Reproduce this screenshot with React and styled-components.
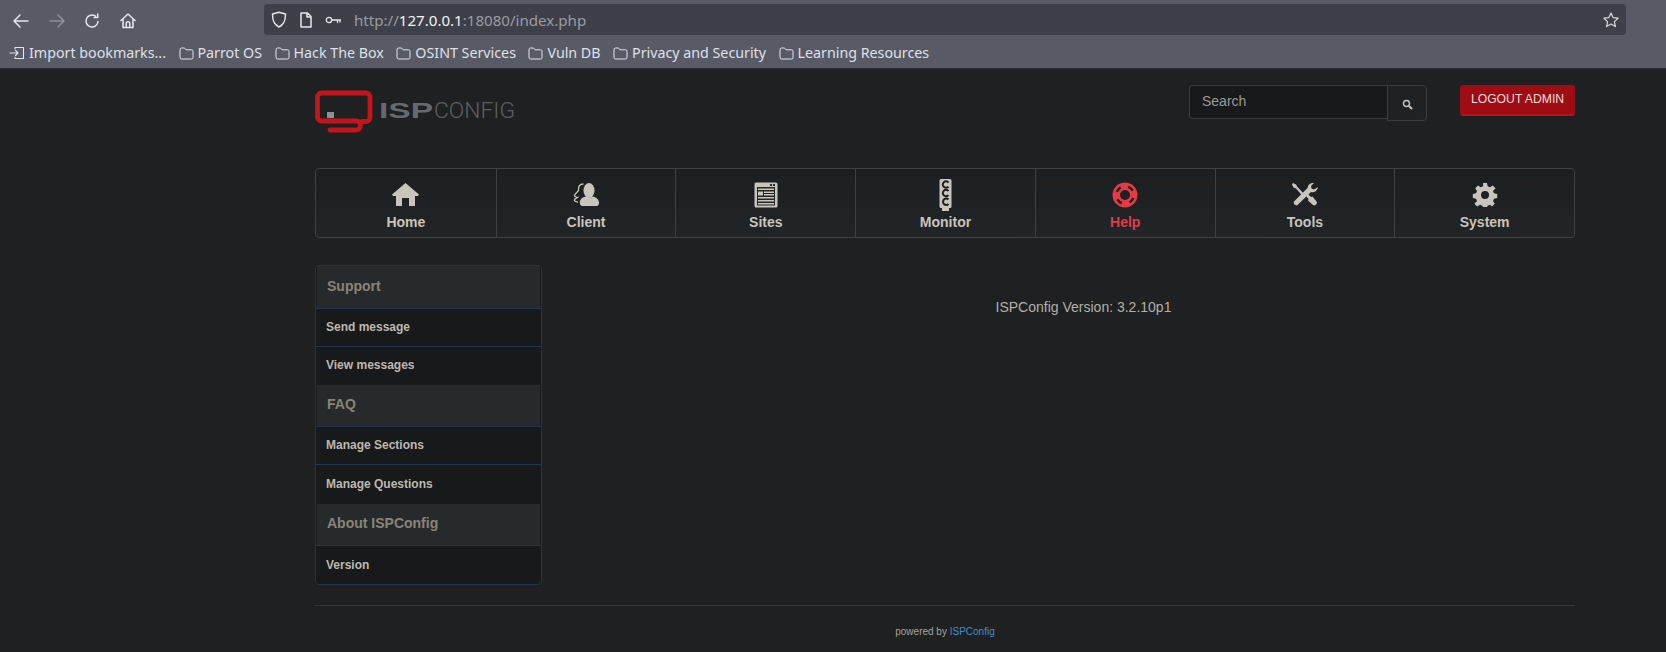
import React from 'react';
import styled, { createGlobalStyle } from 'styled-components';

const Global = createGlobalStyle`
  html, body { margin: 0; padding: 0; background: #1e2022; }
  body { font-family: "Liberation Sans", Arial, sans-serif; overflow: hidden; }
  #root { width: 1666px; height: 652px; overflow: hidden; }
`;

const Chrome = styled.header`
  height: 68px; background: #585a66; border-bottom: 1px solid #2c2e35;
  font-family: "Noto Sans", sans-serif; color: #e4e6ec;
  display: flex; flex-direction: column;
`;
const ToolRow = styled.div`display: flex; align-items: center; height: 40px; padding: 3px 0 2px 0; box-sizing: border-box;`;
const NavIcons = styled.div`display: flex; align-items: center; gap: 17.5px; width: 264px; padding-left: 12px; box-sizing: border-box;`;
const UrlBar = styled.div`
  width: 1362px; height: 31px; margin-top: -2px; background: #3e4049; border-radius: 4px;
  display: flex; align-items: center; padding: 0 7px 0 7px; box-sizing: border-box; gap: 12px;
`;
const Url = styled.div`font-size: 15.1px; color: #9a9ca5; flex: 1;`;
const UrlHost = styled.span`color: #f2f3f6;`;
const BookRow = styled.div`display: flex; align-items: center; height: 25px; padding-left: 9px; gap: 12.5px; font-size: 14.25px;`;
const Book = styled.div`display: flex; align-items: center; gap: 4px; color: #dfe1e8; white-space: nowrap;`;

const Page = styled.div`width: 1260px; margin-left: 315px;`;
const Top = styled.div`display: flex; align-items: flex-start; height: 99px; padding-top: 16px; box-sizing: border-box;`;
const LogoBox = styled.div`width: 874px; height: 50px;`;
const SearchGroup = styled.form`display: flex; align-items: flex-start; margin: 0; width: 238px;`;
const SearchInput = styled.div`
  width: 198px; height: 34px; box-sizing: border-box; background: #18191b; border: 1px solid #3b3e40; border-right: 0;
  border-radius: 4px 0 0 4px; color: #9d9a90; font-size: 14px; padding: 0 12px; line-height: 30px;
`;
const SearchBtn = styled.button`
  width: 40px; height: 36px; box-sizing: border-box; background: #1e2224; border: 1px solid #3b3e40;
  border-radius: 0 4px 4px 0; padding: 2px 0 0; color: #c9c5bc; display: flex; align-items: center; justify-content: center;
`;
const Logout = styled.button`
  margin-left: 33px; width: 115px; height: 31px; box-sizing: border-box; background: #a00c14; border: 1px solid #a00c14;
  border-bottom: 2px solid #bb1119; border-radius: 3px; color: #ecdcdc; font: 12.2px "Liberation Sans", sans-serif; padding: 0 0 2px;
`;

const Menu = styled.nav`
  display: grid; grid-template-columns: repeat(7, 1fr); height: 68px;
  border: 1px solid #3e4143; border-radius: 4px; background: linear-gradient(#1c1e20, #212527);
`;
const MenuItem = styled.a`
  display: flex; flex-direction: column; align-items: center;
  border-left: ${p => (p.$first ? '0' : '1px solid #3e4143')};
  color: ${p => (p.$active ? '#e63a45' : '#c9c5bc')}; font-weight: 700; font-size: 14px;
`;
const IconWrap = styled.div`height: 44px; display: flex; align-items: center; justify-content: center; padding-top: 7px; box-sizing: border-box;`;
const MenuLabel = styled.span`margin-top: 1px; line-height: 16px;`;

const Body = styled.div`display: grid; grid-template-columns: 227px 1fr; margin-top: 27px;`;
const Side = styled.aside`
  border: 1px solid #1e3650; border-radius: 4px; background: #18191b; overflow: hidden; height: 320px; box-sizing: border-box; width: 227px;
`;
const SideHead = styled.div`
  height: ${p => p.$h}px; background: #262a2c; color: #8a8475; font-weight: 700; font-size: 14px; box-sizing: border-box;
  padding: 0 0 ${p => p.$pb}px 11px; display: flex; align-items: center; border-bottom: 1px solid #1e3650;
  box-shadow: inset 1px 0 #18191b, inset -1px 0 #18191b;
`;
const SideItem = styled.a`
  display: flex; align-items: center; height: ${p => p.$h}px; padding: 0 0 ${p => p.$pb}px 10px; font-size: 12px; font-weight: 700; color: #bdb8ae;
  box-sizing: border-box; border-bottom: ${p => (p.$line ? '1px solid #1e3650' : '0')};
`;
const Main = styled.main`text-align: center; color: #b3afa6; font-size: 14px; padding-top: 34px; padding-left: 50px;`;
const Rule = styled.hr`margin: 20px 0 0; border: 0; border-top: 1px solid #36393b;`;
const Foot = styled.footer`text-align: center; font-size: 10px; color: #a8a49b; margin-top: 20px;`;
const FootLink = styled.span`color: #3f8fcf;`;

const s = { fill: 'none', stroke: 'currentColor', strokeWidth: 1.5, strokeLinecap: 'round', strokeLinejoin: 'round' };

const Back = () => <svg width="18" height="16" viewBox="0 0 18 16" {...s}><path d="M16 8H2M8 2 2 8l6 6" /></svg>;
const Fwd = () => <svg width="18" height="16" viewBox="0 0 18 16" {...s} stroke="#8c8e98"><path d="M2 8h14M10 2l6 6-6 6" /></svg>;
const Reload = () => <svg width="18" height="16" viewBox="-1 0 18 16" {...s}><path d="M14 8.500A6 6 0 1 1 11.500 3.200" /><path d="M13.700 1v3.600h-3.600" /></svg>;
const HomeO = () => <svg width="18" height="16" viewBox="-1 0 18 16" {...s}><path d="M1 7.500 8 1l7 6.500M3 6v8.500h10V6M6.200 14.500V10.500a1.800 1.800 0 0 1 3.600 0v4" /></svg>;
const Shield = () => <svg width="16" height="17" viewBox="0 0 16 17" {...s} stroke="#e4e6ec"><path d="M8 1.200 14.500 3c0 7-1.500 10.500-6.500 13C3 13.500 1.500 10 1.500 3z" /></svg>;
const Doc = () => <svg width="14" height="16" viewBox="1 0 14 16" {...s} stroke="#e4e6ec"><path d="M3 1h6.500L13 4.500V15H3zM9 1v4h4" /></svg>;
const Key = () => <svg width="17" height="10" viewBox="0 0 16 10" {...s} stroke="#e4e6ec" strokeWidth="1.300"><circle cx="3.500" cy="5" r="2.700" /><path d="M6.200 5H15M12 5v2.500M14.500 5v2" /></svg>;
const Star = () => <svg width="16" height="16" viewBox="0 0 16 16" {...s} strokeWidth="1.200" stroke="#d6d8de"><path d="m8 1 2.100 4.600 5 .6-3.700 3.400 1 5L8 12.100 3.600 14.600l1-5L.9 6.200l5-.6z" /></svg>;
const Folder = () => <svg width="15" height="14" viewBox="0 0 15 14" {...s} strokeWidth="1" stroke="#e4e6ec"><path d="M1 3.500A1.500 1.500 0 0 1 2.500 2h3l1.500 1.800h5.500A1.500 1.500 0 0 1 14 5.300v6.200a1.500 1.500 0 0 1-1.500 1.500h-10A1.500 1.500 0 0 1 1 11.500z" /></svg>;
const ImportI = () => <svg width="16" height="14" viewBox="0 0 16 14" {...s} strokeWidth="1.100" stroke="#e4e6ec"><path d="M6 3V1.500h8.500v11H6V11M1 7h8M6.500 4.500 9 7 6.500 9.500" /></svg>;
const Mag = () => <svg width="11" height="11" viewBox="0 0 11 11" fill="none" stroke="currentColor"><circle cx="4.500" cy="4.500" r="3" strokeWidth="1.400" /><path d="m7 7 3 3" strokeWidth="2" /></svg>;

const Logo = () => (
  <svg width="210" height="50" viewBox="0 0 210 50">
    <path d="M47 36.500H51a4 4 0 0 0 4-4V12a4 4 0 0 0-4-4H6.500a4 4 0 0 0-4 4V32a4 4 0 0 0 4 4H41a4.500 4.500 0 0 1 0 9H15" fill="none" stroke="#c4141c" strokeWidth="4.800" strokeLinecap="round" />
    <rect x="12" y="27" width="7" height="6" fill="#8b9094" />
    <text x="64" y="33" fontFamily="Liberation Sans" fontWeight="700" fontSize="21.500" fill="#646a6f" textLength="54" lengthAdjust="spacingAndGlyphs">ISP</text>
    <text x="119" y="33" fontFamily="Roboto" fontWeight="300" fontSize="21.500" fill="#5a6064" textLength="81" lengthAdjust="spacingAndGlyphs">CONFIG</text>
  </svg>
);

const HomeIcon = () => <svg width="27" height="23" viewBox="0 0 27 23" fill="currentColor"><path d="M13.500 0 0 11.500l1 1.500h3v10h6v-8h7v8h6V13h3l1-1.500z" /></svg>;
const ClientIcon = () => <svg width="26" height="23" viewBox="0 0 26 23" fill="currentColor"><ellipse cx="16" cy="7.500" rx="5.500" ry="7.500" /><path d="M7 21c-1-5 3-7 6-7.500 2 1.500 4.500 1.500 6.500 0 3.500.5 7 3 6.500 7.500a3 3 0 0 1-2 2H9a3 3 0 0 1-2-2z" /><path d="M10.500 1C6.500 1 5 3.500 5.500 7.500L1.500 12c-.5 1.500 1.500 2.500 3 2.500l-3 2c-.5 1.500 1 2.500 3.500 2.500" fill="none" stroke="currentColor" strokeWidth="1.300" /></svg>;
const SitesIcon = () => <svg width="24" height="26" viewBox="0 0 24 26"><rect x="0.500" y="0.500" width="23" height="25" rx="1.500" fill="#c9c5bc" /><rect x="3" y="5" width="18" height="18.500" fill="#232527" /><rect x="16" y="2" width="2" height="2" fill="#232527" /><rect x="19" y="2" width="2" height="2" fill="#232527" /><path d="M4 6.500h16V8H4zM4 9.500h5v4H4zM10 9.500h10V11H10zM10 12h10v1.500H10zM4 15h16v1.500H4zM4 18h16v1.500H4zM4 21h16v1.500H4z" fill="#c9c5bc" /></svg>;
const MonitorIcon = () => <svg width="13" height="32" viewBox="0 0 13 32"><path d="M2 0h9a1.500 1.500 0 0 1 1.500 1.500v26a1.500 1.500 0 0 1-1.500 1.500H10v3H3v-3H2A1.500 1.500 0 0 1 .5 27.500v-26A1.500 1.500 0 0 1 2 0z" fill="#c9c5bc" /><g fill="none" stroke="#1e2022" strokeWidth="2"><path d="M9.500 3.500a3.200 3.200 0 1 0 0 4M9.500 12a3.200 3.200 0 1 0 0 4M9.500 20.500a3.200 3.200 0 1 0 0 4.500" /></g></svg>;
const HelpIcon = () => <svg width="26" height="26" viewBox="0 0 26 26"><circle cx="13" cy="13" r="12.500" fill="currentColor" /><circle cx="13" cy="13" r="5" fill="#1f2224" /><circle cx="13" cy="13" r="8.800" fill="none" stroke="#1f2224" strokeWidth="2.400" strokeDasharray="6 7.820" transform="rotate(20 13 13)" /></svg>;
const ToolsIcon = () => <svg width="26" height="23" viewBox="0 0 26 23" fill="currentColor"><path d="M1 0 4 1.500 5.500 4 13 12l-1.500 2L4 5.500 1.500 4.500 0 1.500z" /><path d="M14 13l2-2 3 3 1.500-.5 4 5c1.500 2-1.500 5-3.500 3.500l-5-4.500.5-1.500z" /><path d="M26 4a5.500 5.500 0 0 1-7 5L5.500 22c-1.500 1.500-5-1.500-3.500-3.500L15.500 5A5.500 5.500 0 0 1 22 0l-3 3 .5 2.500L22 6.500z" /></svg>;
const GearIcon = () => <svg width="26" height="26" viewBox="0 0 26 26" fill="currentColor" fillRule="evenodd"><path d="M11 1h4l.7 3.200 2.300 1 2.800-1.800 2.800 2.800L21 9l1 2.300 3.200.7v4L22 16.700 21 19l1.800 2.800-2.800 2.800L18 22.800l-2.300 1L15 25h-4l-.7-1.200-2.300-1-2.800 1.800-2.800-2.800L5 19l-1-2.300L.8 16v-4L4 11.300 5 9 3.200 6.200 6 3.400 8.800 5.200l2.300-1zM13 9a4 4 0 1 0 0 8 4 4 0 0 0 0-8z" /></svg>;

const items = [
  ['Home', HomeIcon], ['Client', ClientIcon], ['Sites', SitesIcon], ['Monitor', MonitorIcon],
  ['Help', HelpIcon], ['Tools', ToolsIcon], ['System', GearIcon],
];
const books = ['Parrot OS', 'Hack The Box', 'OSINT Services', 'Vuln DB', 'Privacy and Security', 'Learning Resources'];

export default function App() {
  return (
    <>
      <Global />
      <Chrome>
        <ToolRow>
          <NavIcons><Back /><Fwd /><Reload /><HomeO /></NavIcons>
          <UrlBar>
            <Shield /><Doc /><Key />
            <Url>http://<UrlHost>127.0.0.1</UrlHost>:18080/index.php</Url>
            <Star />
          </UrlBar>
        </ToolRow>
        <BookRow>
          <Book><ImportI />Import bookmarks...</Book>
          {books.map(b => <Book key={b}><Folder />{b}</Book>)}
        </BookRow>
      </Chrome>
      <Page>
        <Top>
          <LogoBox><Logo /></LogoBox>
          <SearchGroup>
            <SearchInput>Search</SearchInput>
            <SearchBtn type="button"><Mag /></SearchBtn>
          </SearchGroup>
          <Logout type="button">LOGOUT ADMIN</Logout>
        </Top>
        <Menu>
          {items.map(([label, Icon], i) => (
            <MenuItem key={label} $first={i === 0} $active={label === 'Help'}>
              <IconWrap><Icon /></IconWrap>
              <MenuLabel>{label}</MenuLabel>
            </MenuItem>
          ))}
        </Menu>
        <Body>
          <Side>
            <SideHead $h={43} $pb={2}>Support</SideHead>
            <SideItem $h={38} $pb={1} $line>Send message</SideItem>
            <SideItem $h={38} $pb={2}>View messages</SideItem>
            <SideHead $h={42} $pb={4}>FAQ</SideHead>
            <SideItem $h={38} $pb={2} $line>Manage Sections</SideItem>
            <SideItem $h={39} $pb={1}>Manage Questions</SideItem>
            <SideHead $h={42} $pb={4}>About ISPConfig</SideHead>
            <SideItem $h={38} $pb={0}>Version</SideItem>
          </Side>
          <Main>ISPConfig Version: 3.2.10p1</Main>
        </Body>
        <Rule />
        <Foot>powered by <FootLink>ISPConfig</FootLink></Foot>
      </Page>
    </>
  );
}
